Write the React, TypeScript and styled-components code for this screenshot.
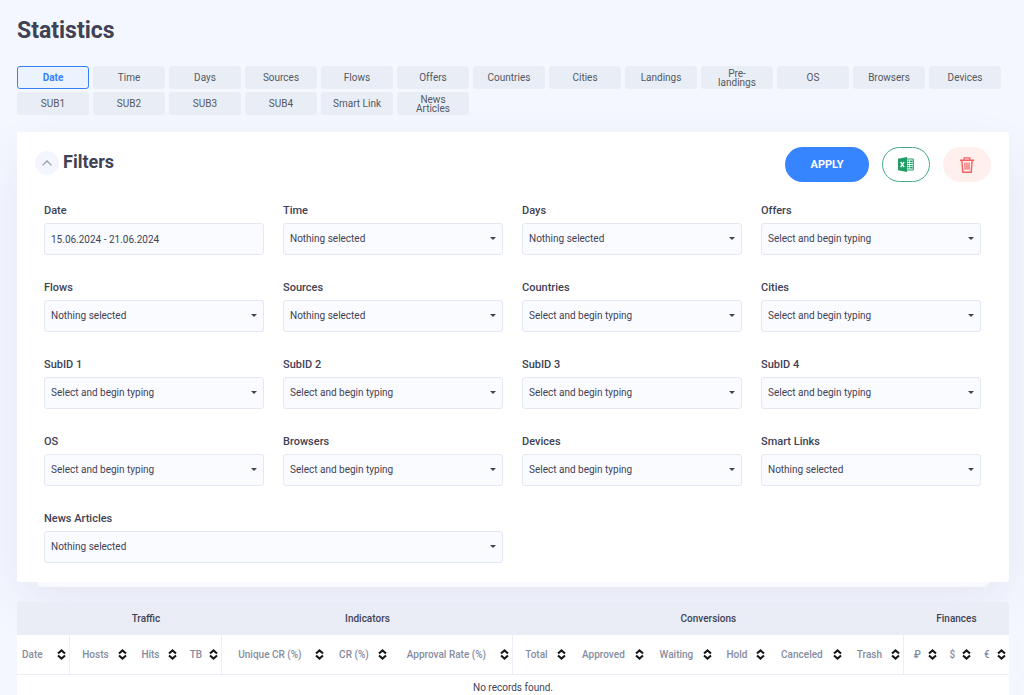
import React from "react";
import styled, { createGlobalStyle, css } from "styled-components";

const GlobalStyle = createGlobalStyle`
  *, *::before, *::after { box-sizing: border-box; }
  body {
    margin: 0;
    background: #f4f7ff;
    color: #3f4255;
    font-family: Roboto, "Liberation Sans", sans-serif;
    font-size: 10px;
    line-height: 14px;
  }
  button, input, select { font: inherit; color: inherit; }
`;

const Page = styled.main`
  padding: 17px 15px 0 17px;
`;

const PageTitle = styled.h1`
  margin: 0;
  font-size: 23px;
  line-height: 28px;
  font-weight: 700;
`;

const Tabs = styled.nav`
  display: flex;
  flex-wrap: wrap;
  gap: 3px 4px;
  margin: 21px 0 17px;
`;

const Tab = styled.button<{ $active?: boolean }>`
  display: flex;
  align-items: center;
  justify-content: center;
  width: 72px;
  height: 23px;
  padding: 0 16px;
  border: 1px solid #e9eef6;
  border-radius: 3px;
  background: #e9eef6;
  color: #55585f;
  line-height: 9px;
  text-align: center;
  cursor: pointer;
  ${(p) =>
    p.$active &&
    css`
      border-color: #3680ff;
      background: #ebf3ff;
      color: #3680ff;
      font-weight: 700;
    `}
`;

const TabLabel = styled.span<{ $wrap?: boolean }>`
  white-space: ${(p) => (p.$wrap ? "normal" : "nowrap")};
`;

const Card = styled.section`
  position: relative;
  padding: 15px 18px 19px;
  border-radius: 3px;
  background: #fff;
  box-shadow: 0 20px 50px -6px rgba(69, 65, 110, 0.1);

  &::after {
    content: "";
    position: absolute;
    left: 20px;
    right: 20px;
    top: 100%;
    height: 5px;
    border-radius: 0 0 8px 8px;
    background: #f9faff;
  }
`;

const CardHeader = styled.header`
  display: flex;
  align-items: center;
  gap: 13px;
  height: 35px;
`;

const Heading = styled.div`
  display: flex;
  align-items: center;
  gap: 4px;
  margin-right: auto;
  padding-bottom: 4px;
`;

const Collapse = styled.button`
  display: grid;
  place-items: center;
  width: 24px;
  height: 24px;
  padding: 0;
  border: 0;
  border-radius: 50%;
  background: #f3f6ff;
  cursor: pointer;
`;

const CardTitle = styled.h2`
  margin: 0;
  padding-bottom: 2px;
  font-size: 18px;
  line-height: 20px;
  font-weight: 700;
`;

const pills = {
  primary: css`
    width: 84px;
    background: #3685ff;
    color: #fff;
  `,
  excel: css`
    width: 48px;
    border: 1px solid #45ab80;
    background: #fff;
  `,
  danger: css`
    width: 48px;
    background: #fff0ee;
  `,
};

const Pill = styled.button<{ $kind: keyof typeof pills }>`
  display: grid;
  place-items: center;
  height: 35px;
  padding: 0;
  border: 0;
  border-radius: 18px;
  font-size: 11px;
  font-weight: 700;
  cursor: pointer;
  ${(p) => pills[p.$kind]}
`;

const FilterGrid = styled.div`
  display: grid;
  grid-template-columns: repeat(4, minmax(0, 1fr));
  gap: 25px 19px;
  padding: 21px 10px 0 9px;
`;

const Field = styled.div<{ $wide?: boolean }>`
  display: grid;
  gap: 4px;
  grid-column: span ${(p) => (p.$wide ? 2 : 1)};
`;

const Label = styled.label`
  font-size: 11px;
  line-height: 16px;
  font-weight: 500;
`;

const control = css`
  display: block;
  width: 100%;
  height: 32px;
  padding: 0 6px;
  border: 1px solid #e4e8f5;
  border-radius: 3px;
  background: #fafbff;
  font-size: 10px;
  appearance: none;
  outline: none;
`;

const TextInput = styled.input`
  ${control}
`;

const SelectWrap = styled.div`
  position: relative;

  &::after {
    content: "";
    position: absolute;
    right: 7px;
    top: 14px;
    border: 3px solid transparent;
    border-top-color: #3f4255;
    border-bottom: 0;
    pointer-events: none;
  }
`;

const Select = styled.select`
  ${control}
`;

const StatsTable = styled.table`
  width: 100%;
  margin-top: 20px;
  table-layout: fixed;
  border-collapse: separate;
  border-spacing: 0;
  position: relative;
`;

const Col = styled.col<{ $share: number }>`
  width: ${(p) => (p.$share / 992) * 100}%;
`;

const GroupHead = styled.th`
  height: 33px;
  padding: 0;
  background: #eaedf6;
  font-weight: 500;
  &:first-child { border-radius: 3px 0 0 0; }
  &:last-child { border-radius: 0 3px 0 0; }
`;

const ColumnHead = styled.th<{ $divider?: boolean }>`
  height: 40px;
  padding: 0;
  border-bottom: 1px solid #ebeef8;
  border-right: ${(p) => (p.$divider ? "1px solid #ebeef8" : "0")};
  background: #fff;
  color: #858c9f;
  font-weight: 500;
`;

const SortButton = styled.button<{ $start?: boolean }>`
  display: flex;
  align-items: center;
  width: 100%;
  padding: 0 3px 0 ${(p) => (p.$start ? 5 : 3)}px;
  border: 0;
  background: none;
  white-space: nowrap;
  cursor: pointer;

  span {
    flex: 1;
    text-align: ${(p) => (p.$start ? "left" : "center")};
  }
  svg { flex: none; }
`;

const EmptyCell = styled.td`
  height: 26px;
  padding: 0;
  background: #fff;
  text-align: center;
`;

const ExcelIcon = () => (
  <svg width="16" height="15" viewBox="0 0 16 15" aria-hidden="true">
    <path fill="#219c67" d="M0 1.7 9 0v15l-9-1.7z" />
    <path fill="none" stroke="#fff" strokeWidth="1.4" d="m2.6 4.8 3.5 5.4M6.1 4.8l-3.5 5.4" />
    <path fill="none" stroke="#219c67" d="M9 2h6.3v11H9" />
    <path
      fill="none"
      stroke="#219c67"
      strokeWidth="1.4"
      d="M9.5 4.2h1.8M12 4.2h2.6M9.5 6.4h1.8M12 6.4h2.6M9.5 8.6h1.8M12 8.6h2.6M9.5 10.8h1.8M12 10.8h2.6"
    />
  </svg>
);

const TrashIcon = () => (
  <svg width="16" height="16" viewBox="0 0 16 16" fill="none" stroke="#f5605f" aria-hidden="true">
    <path strokeWidth="1.4" d="M1 3.2h14M2.8 3.2l1 12h8.4l1-12" />
    <path strokeWidth="1.3" d="M5.2 3V.8h5.6V3" />
    <path strokeWidth="1.2" d="M5.9 5.6l.2 7.2M8 5.6v7.2M10.1 5.6l-.2 7.2" />
  </svg>
);

const ChevronUp = () => (
  <svg width="10" height="6" viewBox="0 0 10 6" fill="none" stroke="#979cae" aria-hidden="true">
    <path strokeWidth="1.3" d="M.6 5.4 5 1l4.4 4.4" />
  </svg>
);

const SortIcon = () => (
  <svg width="9" height="11" viewBox="0 0 9 11" fill="none" stroke="#15161a" aria-hidden="true">
    <path strokeWidth="2" d="M1 4.6 4.5 1.4 8 4.6M1 6.4l3.5 3.2L8 6.4" />
  </svg>
);

const tabs = [
  "Date", "Time", "Days", "Sources", "Flows", "Offers", "Countries", "Cities", "Landings",
  "Pre-landings", "OS", "Browsers", "Devices", "SUB1", "SUB2", "SUB3", "SUB4", "Smart Link",
  "News Articles",
];
const wrapped = ["Pre-landings", "News Articles"];

const NOTHING = "Nothing selected";
const TYPING = "Select and begin typing";

const filters: { label: string; value: string; wide?: boolean }[] = [
  { label: "Time", value: NOTHING },
  { label: "Days", value: NOTHING },
  { label: "Offers", value: TYPING },
  { label: "Flows", value: NOTHING },
  { label: "Sources", value: NOTHING },
  { label: "Countries", value: TYPING },
  { label: "Cities", value: TYPING },
  { label: "SubID 1", value: TYPING },
  { label: "SubID 2", value: TYPING },
  { label: "SubID 3", value: TYPING },
  { label: "SubID 4", value: TYPING },
  { label: "OS", value: TYPING },
  { label: "Browsers", value: TYPING },
  { label: "Devices", value: TYPING },
  { label: "Smart Links", value: NOTHING },
  { label: "News Articles", value: NOTHING, wide: true },
];

const columns: { name: string; share: number; divider?: boolean }[] = [
  { name: "Date", share: 53, divider: true },
  { name: "Hosts", share: 60 },
  { name: "Hits", share: 50 },
  { name: "TB", share: 42, divider: true },
  { name: "Unique CR (%)", share: 105 },
  { name: "CR (%)", share: 63 },
  { name: "Approval Rate (%)", share: 123, divider: true },
  { name: "Total", share: 56 },
  { name: "Approved", share: 78 },
  { name: "Waiting", share: 68 },
  { name: "Hold", share: 53 },
  { name: "Canceled", share: 77 },
  { name: "Trash", share: 59, divider: true },
  { name: "₽", share: 36 },
  { name: "$", share: 34 },
  { name: "€", share: 35 },
];

export default function App() {
  return (
    <Page>
      <GlobalStyle />
      <PageTitle>Statistics</PageTitle>
      <Tabs aria-label="Group by">
        {tabs.map((name, i) => (
          <Tab key={name} type="button" $active={i === 0}>
            <TabLabel $wrap={wrapped.includes(name)}>{name}</TabLabel>
          </Tab>
        ))}
      </Tabs>

      <Card>
        <CardHeader>
          <Heading>
            <Collapse type="button" aria-label="Collapse filters">
              <ChevronUp />
            </Collapse>
            <CardTitle>Filters</CardTitle>
          </Heading>
          <Pill type="button" $kind="primary">APPLY</Pill>
          <Pill type="button" $kind="excel" aria-label="Export to Excel">
            <ExcelIcon />
          </Pill>
          <Pill type="button" $kind="danger" aria-label="Clear filters">
            <TrashIcon />
          </Pill>
        </CardHeader>
        <FilterGrid>
          <Field>
            <Label htmlFor="filter-date">Date</Label>
            <TextInput id="filter-date" defaultValue="15.06.2024 - 21.06.2024" />
          </Field>
          {filters.map(({ label, value, wide }, i) => (
            <Field key={label} $wide={wide}>
              <Label htmlFor={`filter-${i}`}>{label}</Label>
              <SelectWrap>
                <Select id={`filter-${i}`}>
                  <option>{value}</option>
                </Select>
              </SelectWrap>
            </Field>
          ))}
        </FilterGrid>
      </Card>

      <StatsTable>
        <colgroup>
          {columns.map((c) => (
            <Col key={c.name} $share={c.share} />
          ))}
        </colgroup>
        <thead>
          <tr>
            <GroupHead />
            <GroupHead colSpan={3}>Traffic</GroupHead>
            <GroupHead colSpan={3}>Indicators</GroupHead>
            <GroupHead colSpan={6}>Conversions</GroupHead>
            <GroupHead colSpan={3}>Finances</GroupHead>
          </tr>
          <tr>
            {columns.map((c, i) => (
              <ColumnHead key={c.name} $divider={c.divider}>
                <SortButton type="button" $start={i === 0}>
                  <span>{c.name}</span>
                  <SortIcon />
                </SortButton>
              </ColumnHead>
            ))}
          </tr>
        </thead>
        <tbody>
          <tr>
            <EmptyCell colSpan={columns.length}>No records found.</EmptyCell>
          </tr>
        </tbody>
      </StatsTable>
    </Page>
  );
}
